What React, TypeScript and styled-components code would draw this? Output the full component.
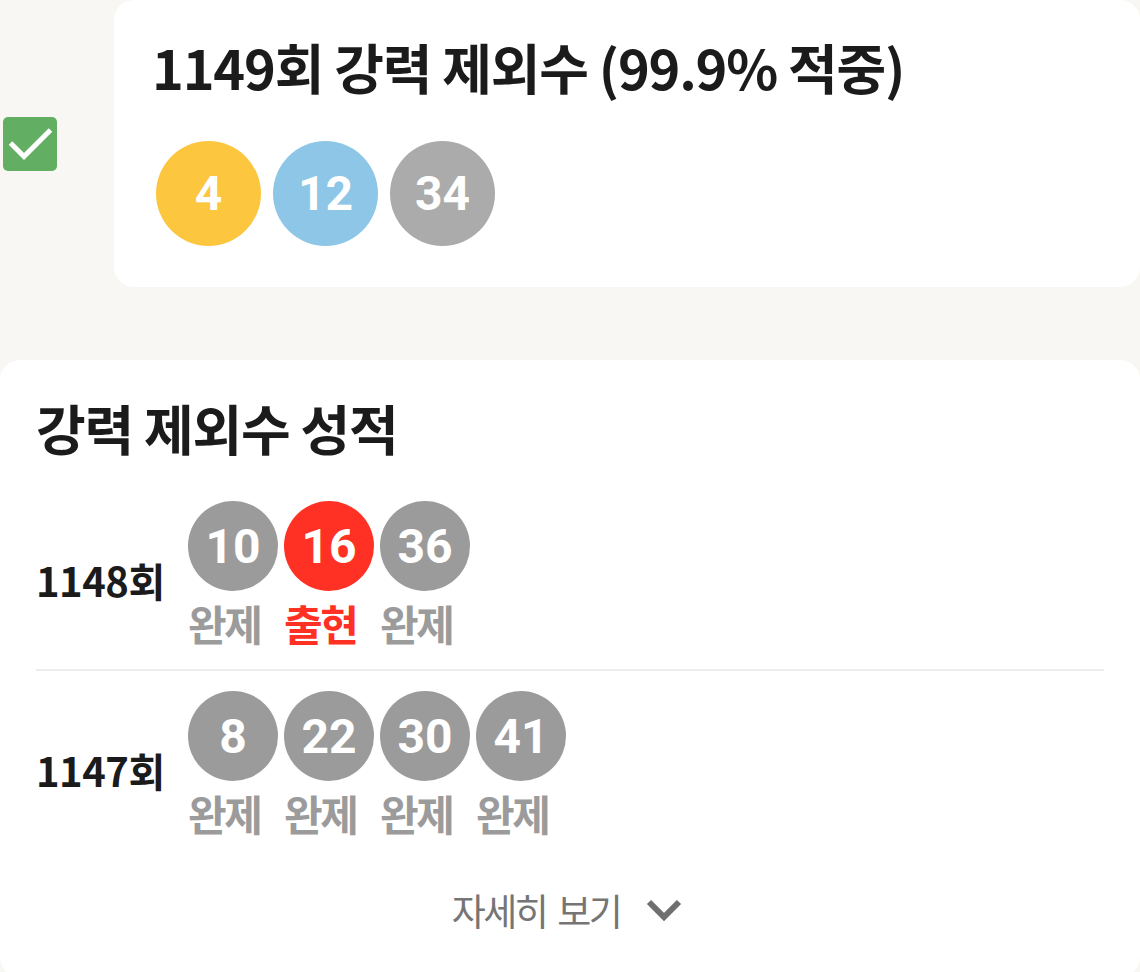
import React from "react";
import styled, { createGlobalStyle } from "styled-components";

const GlobalStyle = createGlobalStyle`
  html, body {
    margin: 0;
    padding: 0;
    background: #f8f7f3;
  }
  body {
    font-family: "Noto Sans CJK KR", "Noto Sans", sans-serif;
    color: #1b1b1b;
  }
`;

const Page = styled.div`
  width: 1140px;
  display: flex;
  flex-direction: column;
  gap: 73px;
`;

const TopRow = styled.div`
  display: flex;
  align-items: center;
  gap: 57px;
  padding-left: 3px;
`;

const CheckBox = styled.div`
  width: 54px;
  height: 54px;
  flex: none;
  border-radius: 5px;
  background: #62ae63;
  display: flex;
`;

const Card = styled.div<{ $pad: string }>`
  flex: 1;
  background: #ffffff;
  border-radius: 20px;
  padding: ${(p) => p.$pad};
  display: flex;
  flex-direction: column;
`;

const Title = styled.h2<{ $mb: number }>`
  margin: 0 0 ${(p) => p.$mb}px;
  font-family: "Noto Sans CJK KR", sans-serif;
  font-weight: 700;
  font-size: 54px;
  line-height: 62px;
  letter-spacing: -1.2px;
  color: #1b1b1b;
`;

const BallRow = styled.div<{ $gap: number; $indent?: number }>`
  display: flex;
  gap: ${(p) => p.$gap}px;
  margin-left: ${(p) => p.$indent ?? 0}px;
`;

const Ball = styled.div<{ $size: number; $color: string }>`
  width: ${(p) => p.$size}px;
  height: ${(p) => p.$size}px;
  border-radius: 50%;
  background: ${(p) => p.$color};
  color: #ffffff;
  font-family: Roboto, "Noto Sans", sans-serif;
  font-weight: 700;
  font-size: 48px;
  display: flex;
  align-items: center;
  justify-content: center;
  flex: none;
`;

const Row = styled.div<{ $divider?: boolean }>`
  display: flex;
  align-items: center;
  padding: 20px 0;
  border-bottom: ${(p) => (p.$divider ? "2px solid #ececec" : "none")};
`;

const RoundLabel = styled.div`
  width: 150px;
  flex: none;
  font-weight: 700;
  font-size: 40px;
  letter-spacing: -0.5px;
  color: #1b1b1b;
  padding-top: 10px;
`;

const Result = styled.div`
  display: flex;
  flex-direction: column;
  align-items: flex-start;
  gap: 6px;
`;

const Status = styled.div<{ $hit?: boolean }>`
  font-weight: 700;
  font-size: 42px;
  line-height: 52px;
  letter-spacing: -2.5px;
  color: ${(p) => (p.$hit ? "#ff3124" : "#9b9b9b")};
`;

const More = styled.button`
  align-self: center;
  margin-top: 24px;
  margin-left: -6px;
  border: none;
  background: none;
  padding: 0;
  display: flex;
  align-items: center;
  gap: 26px;
  font-family: "Noto Sans CJK KR", sans-serif;
  font-weight: 400;
  font-size: 37px;
  letter-spacing: -2.5px;
  word-spacing: 5px;
  color: #757575;
  cursor: pointer;
`;

type Draw = {
  round: string;
  items: { n: number; hit?: boolean }[];
};

const draws: Draw[] = [
  { round: "1148회", items: [{ n: 10 }, { n: 16, hit: true }, { n: 36 }] },
  { round: "1147회", items: [{ n: 8 }, { n: 22 }, { n: 30 }, { n: 41 }] },
];

export default function App() {
  return (
    <>
      <GlobalStyle />
      <Page>
        <TopRow>
          <CheckBox>
            <svg width="54" height="54" viewBox="0 0 54 54">
              <path d="M7.5 26 L21 39.5 L47.5 13" stroke="#ffffff" strokeWidth="5" fill="none" />
            </svg>
          </CheckBox>
          <Card $pad="36px 38px 41px">
            <Title $mb={43}>1149회 강력 제외수 (99.9% 적중)</Title>
            <BallRow $gap={12} $indent={4}>
              <Ball $size={105} $color="#fcc63f">4</Ball>
              <Ball $size={105} $color="#8ec6e7">12</Ball>
              <Ball $size={105} $color="#ababab">34</Ball>
            </BallRow>
          </Card>
        </TopRow>
        <Card $pad="37px 36px 40px">
          <Title $mb={22}>강력 제외수 성적</Title>
          {draws.map((d, i) => (
            <Row key={d.round} $divider={i < draws.length - 1}>
              <RoundLabel>{d.round}</RoundLabel>
              <BallRow $gap={6} $indent={2}>
                {d.items.map((it) => (
                  <Result key={it.n}>
                    <Ball $size={90} $color={it.hit ? "#ff3124" : "#9b9b9b"}>
                      {it.n}
                    </Ball>
                    <Status $hit={it.hit}>{it.hit ? "출현" : "완제"}</Status>
                  </Result>
                ))}
              </BallRow>
            </Row>
          ))}
          <More>
            자세히 보기
            <svg width="36" height="22" viewBox="0 0 36 22">
              <path d="M3 3 L18 18 L33 3" stroke="#6f6f6f" strokeWidth="6" fill="none" />
            </svg>
          </More>
        </Card>
      </Page>
    </>
  );
}
